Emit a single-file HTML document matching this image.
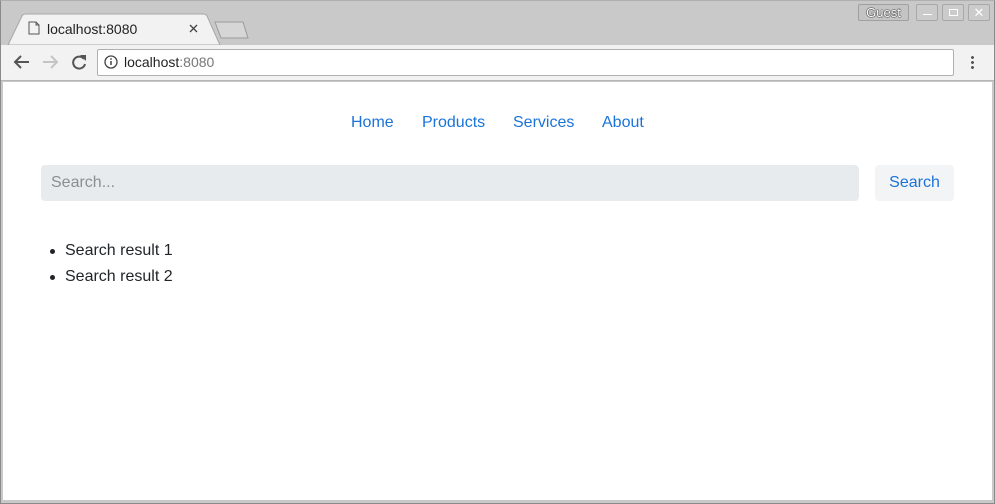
<!DOCTYPE html>
<html><head><meta charset="utf-8"><style>
*{margin:0;padding:0;box-sizing:border-box}
body{width:995px;height:504px;overflow:hidden;background:#c9c9c9;font-family:"Liberation Sans",sans-serif;position:relative}
.abs{position:absolute}
</style></head><body>
<div class="abs" style="left:0;top:0;width:995px;height:504px;border:1px solid #8a8a8a;border-top-color:#b0b0b0"></div>
<svg class="abs" style="left:0;top:0" width="260" height="46">
<path d="M8 45 L22 16 Q23 14 26 14 L203 14 Q206 14 207 16 L220 45 Z" fill="#f2f2f2" stroke="#a8a8a8"/>
<path d="M215 22 L243 22 L248 38 L221 38 Z" fill="#d6d6d6" stroke="#9a9a9a"/>
<path d="M29 22 h7 l3 3 v9 h-10 z M36 22 v3 h3" fill="none" stroke="#555" stroke-width="1"/>
<path d="M190 25 l7 7 M197 25 l-7 7" stroke="#444" stroke-width="1.3"/>
</svg>
<div class="abs" style="left:47px;top:21px;font-size:14px;color:#222">localhost:8080</div>
<div class="abs" style="left:858px;top:4px;width:51px;height:17px;border:1px solid #a0a0a0;border-radius:2px;background:#c4c4c4;font-size:13px;color:#fff;text-align:center;line-height:15px;text-shadow:0 0 1px #222,0 0 1px #222,0 0 1px #222">Guest</div>
<div class="abs" style="left:916px;top:4px;width:22px;height:17px;border:1px solid #a8a8a8;border-radius:2px;background:#cbcbcb"><div class="abs" style="left:6px;top:9px;width:9px;height:1px;background:#fff"></div></div>
<div class="abs" style="left:942px;top:4px;width:22px;height:17px;border:1px solid #a8a8a8;border-radius:2px;background:#cbcbcb"><div class="abs" style="left:6px;top:4px;width:9px;height:7px;border:1px solid #fff"></div></div>
<div class="abs" style="left:968px;top:4px;width:22px;height:17px;border:1px solid #a8a8a8;border-radius:2px;background:#cbcbcb;color:#fff;font-size:13px;text-align:center;line-height:15px">✕</div>
<div class="abs" style="left:1px;top:45px;width:993px;height:36px;background:#f2f2f2;border-bottom:1px solid #b5b5b5"></div>
<svg class="abs" style="left:0;top:45px" width="100" height="36">
<path d="M15 17 h14 M21 11 l-6 6 l6 6" fill="none" stroke="#555" stroke-width="2"/>
<path d="M43 17 h14 M51 11 l6 6 l-6 6" fill="none" stroke="#c4c4c4" stroke-width="2"/>
<path d="M84 14 A6 6 0 1 0 85 19" fill="none" stroke="#555" stroke-width="2"/>
<path d="M80 10 l6 0 l0 6 z" fill="#555"/>
</svg>
<div class="abs" style="left:97px;top:49px;width:857px;height:27px;background:#fff;border:1px solid #b0b0b0;border-radius:2px"></div>
<svg class="abs" style="left:103px;top:54px" width="16" height="16"><circle cx="8" cy="8" r="6" fill="none" stroke="#444" stroke-width="1.3"/><path d="M8 7 v4" stroke="#444" stroke-width="1.5"/><circle cx="8" cy="5" r="0.9" fill="#444"/></svg>
<div class="abs" style="left:124px;top:54px;font-size:14px;color:#222">localhost<span style="color:#777">:8080</span></div>
<div class="abs" style="left:971px;top:55px;width:3px;height:15px;background:radial-gradient(circle,#555 1.3px,transparent 1.6px) 0 0/3px 5px"></div>
<div class="abs" style="left:3px;top:82px;width:989px;height:418px;background:#fff"></div>
<div class="abs" style="left:351px;top:114px;font-size:16px;color:#1a73d9">Home</div>
<div class="abs" style="left:422px;top:114px;font-size:16px;color:#1a73d9">Products</div>
<div class="abs" style="left:513px;top:114px;font-size:16px;color:#1a73d9">Services</div>
<div class="abs" style="left:602px;top:114px;font-size:16px;color:#1a73d9">About</div>
<div class="abs" style="left:41px;top:165px;width:818px;height:36px;background:#e8ebee;border-radius:4px;font-size:16px;color:#8a8f95;padding:9px 10px">Search...</div>
<div class="abs" style="left:875px;top:165px;width:79px;height:36px;background:#f2f4f6;border-radius:4px;font-size:16px;color:#1a73d9;text-align:center;line-height:36px">Search</div>
<div class="abs" style="left:65px;top:238px;font-size:16px;color:#212529;line-height:26px">
<div style="position:relative">Search result 1<span style="position:absolute;left:-15px;top:11px;width:5px;height:5px;border-radius:50%;background:#212529"></span></div>
<div style="position:relative">Search result 2<span style="position:absolute;left:-15px;top:11px;width:5px;height:5px;border-radius:50%;background:#212529"></span></div>
</div>
</body></html>
